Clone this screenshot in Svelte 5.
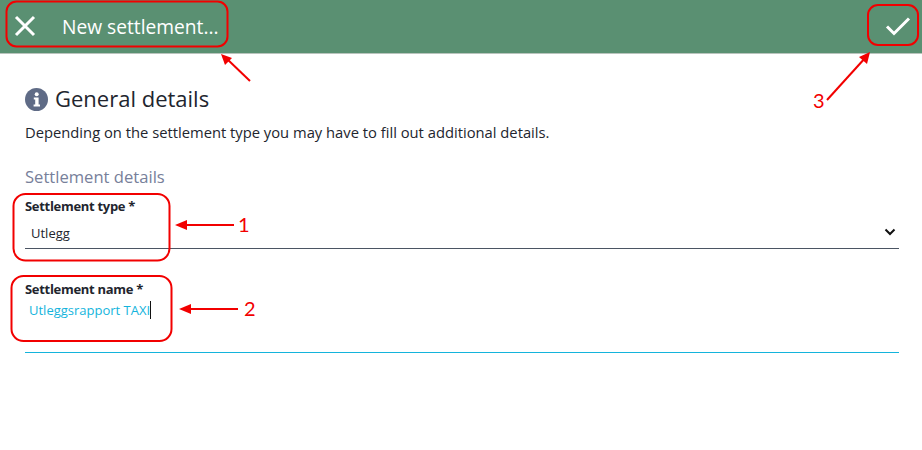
<script lang="ts">
  let title = "New settlement...";
  let typeValue = "Utlegg";
  let nameValue = "Utleggsrapport TAXI";
</script>

<div class="page">
  <header class="bar">
    <div class="left">
      <button type="button" class="icon-btn close" aria-label="Close">
        <svg width="22" height="22" viewBox="0 0 22 22"><path d="M2 2 L20 20 M20 2 L2 20" /></svg>
      </button>
      <span class="title">{title}</span>
    </div>
    <button type="button" class="icon-btn check" aria-label="Save">
      <svg width="26" height="20" viewBox="0 0 26 20"><path d="M2 10.5 L9 17.5 L24 2.5" /></svg>
    </button>
  </header>

  <main class="content">
    <div class="heading">
      <svg class="info" width="23" height="23" viewBox="0 0 23 23">
        <circle cx="11.5" cy="11.5" r="11.5" fill="#5f6b86" />
        <circle cx="11.7" cy="6.3" r="2" fill="#fff" />
        <path d="M8.8 9.6 H13.6 V16.6 H15 V18.6 H8.6 V16.6 H10.2 V11.6 H8.8 Z" fill="#fff" />
      </svg>
      <h1>General details</h1>
    </div>
    <p class="intro">Depending on the settlement type you may have to fill out additional details.</p>

    <h2>Settlement details</h2>

    <div class="field select">
      <label for="stype">Settlement type *</label>
      <div class="control" id="stype">
        <span class="value">{typeValue}</span>
        <svg width="12" height="8" viewBox="0 0 12 8"><path d="M1.5 1.5 L6 6 L10.5 1.5" /></svg>
      </div>
    </div>

    <div class="field active">
      <label for="sname">Settlement name *</label>
      <div class="control" id="sname">
        <span class="value">{nameValue}</span><span class="caret"></span>
      </div>
    </div>
  </main>

  <svg class="notes" width="922" height="450" viewBox="0 0 922 450">
    <g class="boxes">
      <rect x="6.5" y="1.5" width="221" height="45" rx="10" />
      <rect x="868" y="5" width="50" height="40" rx="10" />
      <rect x="13.5" y="194" width="156" height="66.5" rx="12" />
      <rect x="11.5" y="276" width="160" height="65" rx="12" />
    </g>
    <g class="arrows">
      <path d="M250 81 L226 58" />
      <path d="M827 100 L866 57" />
      <path d="M234 225 L184 225" />
      <path d="M238 309 L188 309" />
    </g>
    <g class="heads">
      <polygon points="221,54 232,58 225,65" />
      <polygon points="870,52 867,64 859,57" />
      <polygon points="175,225 187,220 187,230" />
      <polygon points="179,309 191,304 191,314" />
    </g>
    <text x="238" y="232">1</text>
    <text x="244" y="316">2</text>
    <text x="813" y="108">3</text>
  </svg>
</div>

<style>
  :global(body) { margin: 0; background: #fff; }
  .page { position: relative; width: 922px; height: 450px; overflow: hidden; font-family: "Open Sans", sans-serif; color: #22252e; }
  .bar { display: flex; align-items: center; justify-content: space-between; height: 54px; box-sizing: border-box; padding: 0 11px 1px 14px; background: #5a9072; border-bottom: 1px solid #b9c4bd; }
  .left { display: flex; align-items: center; gap: 26px; }
  .icon-btn { display: flex; padding: 0; border: 0; background: none; }
  .icon-btn path { fill: none; stroke: #fff; stroke-width: 3; }
  .title { color: #fff; font-size: 19.2px; padding-top: 1px; }
  .content { display: flex; flex-direction: column; padding: 31px 23px 0 25px; }
  .heading { display: flex; align-items: center; gap: 7px; }
  h1 { margin: 0; padding-bottom: 2px; font-size: 22px; font-weight: 400; line-height: 26px; }
  .intro { margin: 9px 0 0; font-size: 14.75px; line-height: 20px; }
  h2 { margin: 24px 0 0; font-size: 16.6px; font-weight: 400; line-height: 22px; color: #77809a; }
  .field { display: flex; flex-direction: column; }
  .field label { font-size: 13px; font-weight: 700; letter-spacing: -0.3px; line-height: 18px; margin-top: 9px; }
  .control { display: flex; align-items: center; justify-content: space-between; height: 34px; box-sizing: border-box; padding: 0 3px 0 6px; border-bottom: 1px solid #4b5563; font-size: 13px; }
  .control path { fill: none; stroke: #111; stroke-width: 2; }
  .select .value { padding-top: 2px; }
  .active { margin-top: 22px; }
  .active .control { justify-content: flex-start; align-items: flex-start; height: 55px; padding: 3px 0 0 4px; border-bottom: 1px solid #14b4dc; color: #14b4dc; }
  .caret { width: 1px; height: 18px; background: #111; }
  .notes { position: absolute; inset: 0; pointer-events: none; }
  .notes .boxes rect { fill: none; stroke: #f20000; stroke-width: 2; }
  .notes .arrows path { fill: none; stroke: #f20000; stroke-width: 2; }
  .notes .heads polygon { fill: #f20000; }
  .notes text { fill: #f20000; font-family: "Lato", sans-serif; font-size: 20px; }
</style>
